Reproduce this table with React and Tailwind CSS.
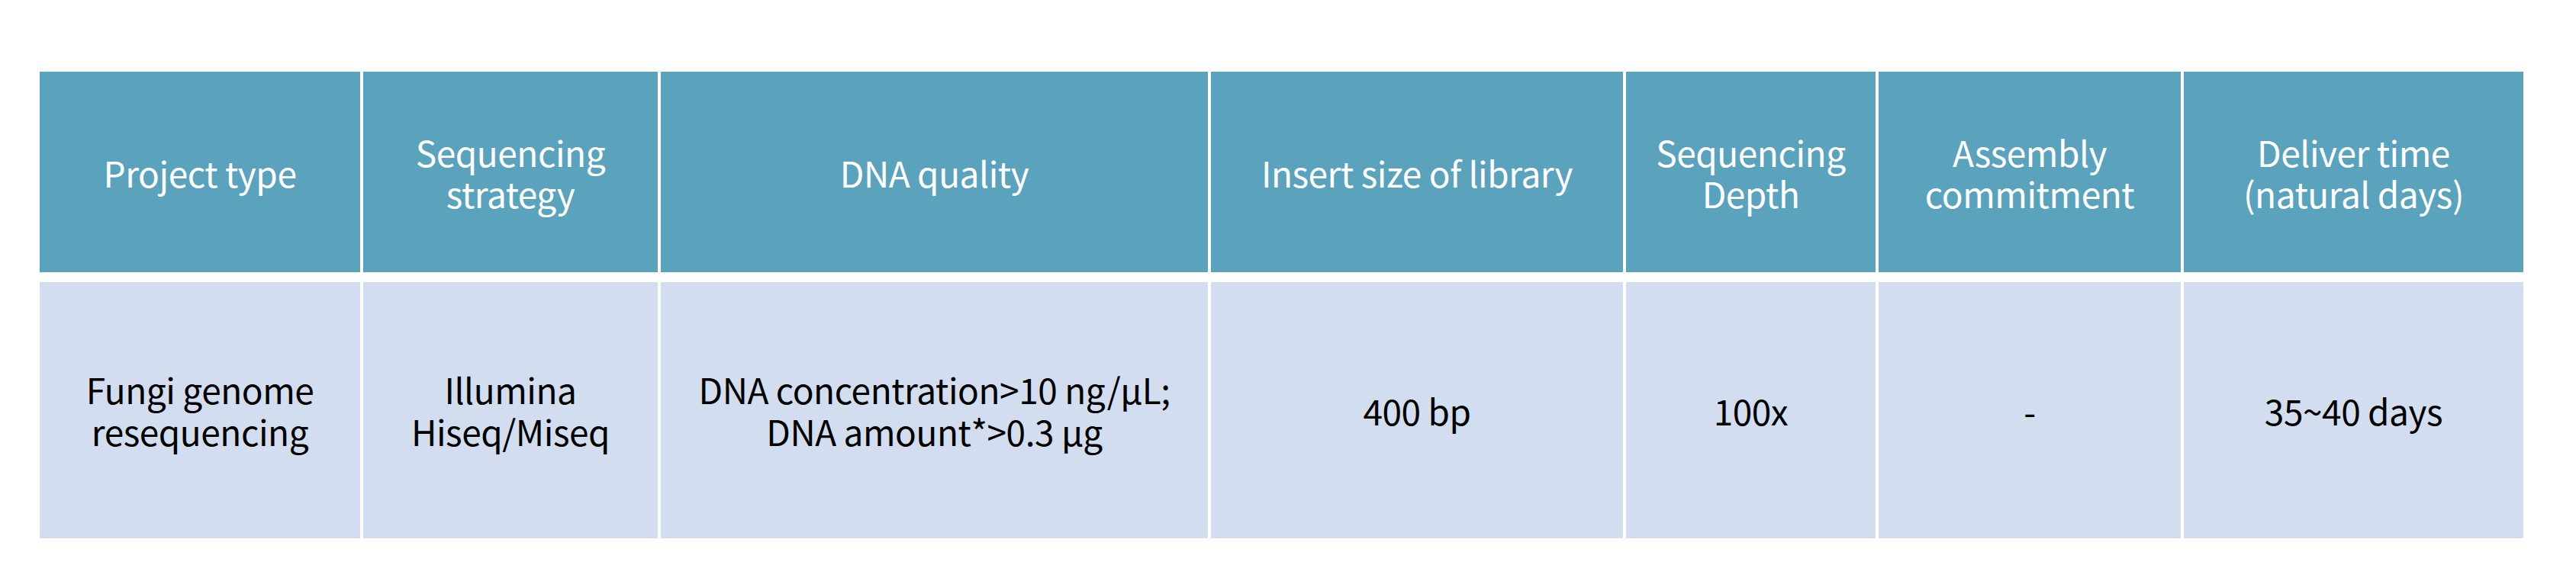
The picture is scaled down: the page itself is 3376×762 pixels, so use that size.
export default function App() {
  const headers = [
    ["Project type"],
    ["Sequencing", "strategy"],
    ["DNA quality"],
    ["Insert size of library"],
    ["Sequencing", "Depth"],
    ["Assembly", "commitment"],
    ["Deliver time", "(natural days)"],
  ];
  const body = [
    ["Fungi genome", "resequencing"],
    ["Illumina", "Hiseq/Miseq"],
    ["DNA concentration>10 ng/μL;", "DNA amount*>0.3 μg"],
    ["400 bp"],
    ["100x"],
    ["-"],
    ["35~40 days"],
  ];
  const render = (lines) => (
    <p className="whitespace-nowrap">
      {lines.map((l, j) => (
        <span key={j}>
          {j > 0 && <br />}
          {l}
        </span>
      ))}
    </p>
  );
  return (
    <div
      className="w-[3376px] h-[762px] bg-white pt-[94px] pl-[52px]"
      style={{ fontFamily: '"Noto Sans CJK SC", "Source Sans Pro", sans-serif' }}
    >
      <div className="grid grid-cols-[420px_386px_717px_540px_327px_396px_445px] grid-rows-[263px_336px] gap-x-[4px] gap-y-[13px] w-[3255px]">
        {headers.map((lines, i) => (
          <div
            key={"h" + i}
            className="bg-[#5ba3bd] text-white flex items-center justify-center text-center text-[46px] leading-[54px] tracking-[-0.01em]"
          >
            {render(lines)}
          </div>
        ))}
        {body.map((lines, i) => (
          <div
            key={"b" + i}
            className="bg-[#d2deef] text-black flex items-center justify-center text-center text-[46px] leading-[55px] tracking-[-0.01em]"
          >
            {render(lines)}
          </div>
        ))}
      </div>
    </div>
  );
}
